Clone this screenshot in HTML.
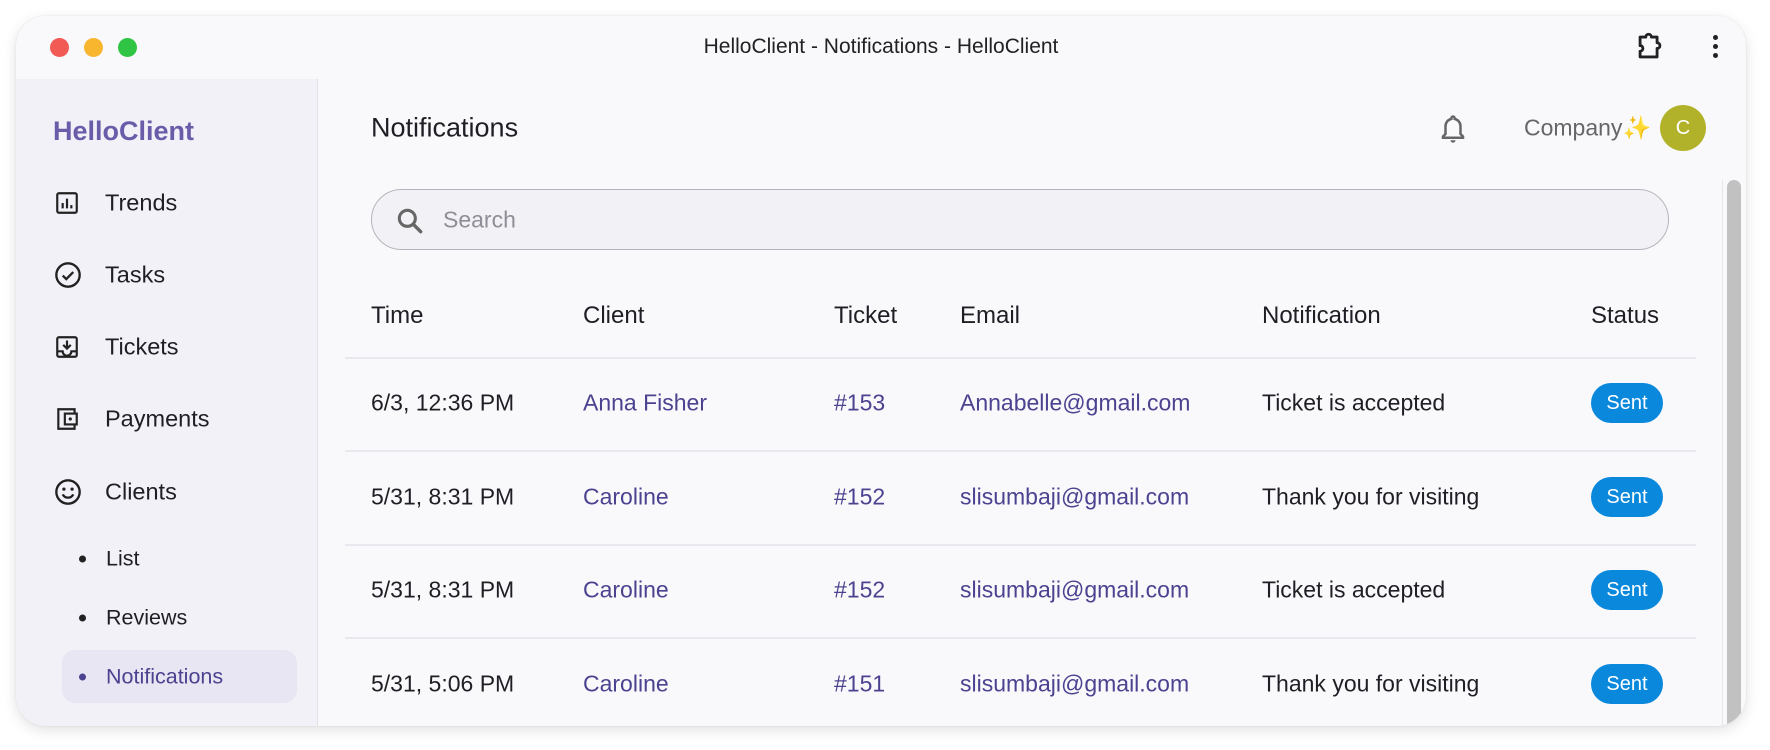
<!DOCTYPE html>
<html><head><meta charset="utf-8"><style>
*{margin:0;padding:0;box-sizing:border-box}
body{width:1770px;height:750px;background:#fff;font-family:"Liberation Sans",sans-serif;position:relative;overflow:hidden;color:#1e1e24}
.win{position:absolute;left:16px;top:16px;width:1730px;height:710px;border-radius:30px;background:#f9f9fc;overflow:hidden;box-shadow:0 4px 14px rgba(0,0,0,.12),0 0 2px rgba(0,0,0,.08)}
.a{position:absolute;white-space:nowrap}
.dot{position:absolute;width:19px;height:19px;border-radius:50%;top:22px}
.side{position:absolute;left:0;top:63px;width:302px;height:650px;background:#f2f1f8;border-right:1px solid #e2e1e8}
.nav{position:absolute;left:89px;font-size:23.5px;color:#1e1e24;transform:translateY(-50%)}
.ico{position:absolute;left:38px;transform:translateY(-50%)}
.sub{position:absolute;left:90px;font-size:21.5px;transform:translateY(-50%)}
.bul{position:absolute;left:63px;width:7px;height:7px;border-radius:50%;background:#222;transform:translateY(-50%)}
.th{font-size:24px;color:#1e1e24;transform:translateY(-50%)}
.td{font-size:23px;transform:translateY(-50%)}
.lk{color:#4b4290}
.line{position:absolute;left:329px;width:1351px;height:2px;background:#e8e8ee}
.sent{position:absolute;left:1575px;width:72px;height:40px;border-radius:20px;background:#0a88dc;color:#fff;font-size:20px;text-align:center;line-height:40px;transform:translateY(-50%)}
</style></head><body>
<div class="win">
 <div class="dot" style="left:34px;background:#f25a55"></div>
 <div class="dot" style="left:68px;background:#f7b62e"></div>
 <div class="dot" style="left:102px;background:#2fc443"></div>
 <div class="a" style="left:0;width:1730px;text-align:center;top:19px;font-size:21px;color:#222">HelloClient - Notifications - HelloClient</div>
 <svg class="a" style="left:1617px;top:14px" width="34" height="34" viewBox="0 0 24 24"><path d="M5 5h4a2 2 0 014 0h4v4a2 2 0 010 4v6H5v-4a2 2 0 000-4z" fill="none" stroke="#222" stroke-width="2" stroke-linejoin="round"/></svg>
 <div class="a" style="left:1697px;top:19px;width:5px;height:5px;border-radius:50%;background:#222;box-shadow:0 9px 0 #222,0 18px 0 #222"></div>

 <div class="side">
  <div class="a" style="left:37px;top:37px;font-size:27px;font-weight:bold;color:#6a5ca8">HelloClient</div>
  <svg class="ico" style="top:124px" width="26" height="26" viewBox="0 0 24 24"><rect x="3" y="3" width="18" height="18" rx="1.5" fill="none" stroke="#222" stroke-width="2"/><path d="M8 17v-5M12 17V8M16 17v-3" stroke="#222" stroke-width="2"/></svg>
  <div class="nav" style="top:124px">Trends</div>
  <svg class="ico" style="top:196px" width="28" height="28" viewBox="0 0 24 24"><circle cx="12" cy="12" r="10" fill="none" stroke="#222" stroke-width="2"/><path d="M7.5 12.5l3 3 6-6" fill="none" stroke="#222" stroke-width="2"/></svg>
  <div class="nav" style="top:196px">Tasks</div>
  <svg class="ico" style="top:268px" width="26" height="26" viewBox="0 0 24 24"><rect x="3" y="3" width="18" height="18" rx="1.5" fill="none" stroke="#222" stroke-width="2"/><path d="M12 6v7M8.5 10l3.5 3.5 3.5-3.5M3 16h5a4 4 0 008 0h5" fill="none" stroke="#222" stroke-width="2"/></svg>
  <div class="nav" style="top:268px">Tickets</div>
  <svg class="ico" style="top:340px" width="26" height="26" viewBox="0 0 24 24"><path d="M19 6V3H4v18h15v-3" fill="none" stroke="#222" stroke-width="2"/><rect x="10" y="7" width="11" height="10" fill="none" stroke="#222" stroke-width="2"/><circle cx="15" cy="12" r="1.5" fill="#222"/></svg>
  <div class="nav" style="top:340px">Payments</div>
  <svg class="ico" style="top:413px" width="28" height="28" viewBox="0 0 24 24"><circle cx="12" cy="12" r="10" fill="none" stroke="#222" stroke-width="2"/><circle cx="8.5" cy="9.5" r="1.4" fill="#222"/><circle cx="15.5" cy="9.5" r="1.4" fill="#222"/><path d="M7.5 14a5 5 0 009 0" fill="none" stroke="#222" stroke-width="2"/></svg>
  <div class="nav" style="top:413px">Clients</div>
  <div class="bul" style="top:480px"></div><div class="sub" style="top:480px">List</div>
  <div class="bul" style="top:539px"></div><div class="sub" style="top:539px">Reviews</div>
  <div class="a" style="left:46px;top:571px;width:235px;height:53px;border-radius:13px;background:#e9e6f3"></div>
  <div class="bul" style="top:598px;background:#4b4290"></div><div class="sub" style="top:598px;color:#4b4290">Notifications</div>
 </div>

 <div class="a" style="left:355px;top:112px;font-size:27px;color:#1e1e24;transform:translateY(-50%)">Notifications</div>
 <svg class="a" style="left:1422px;top:96px" width="30" height="34" viewBox="0 0 24 26"><path d="M12 3a1.3 1.3 0 011.3 1.3v.6A6 6 0 0118 11v6l2 2v1H4v-1l2-2v-6a6 6 0 014.7-6.1v-.6A1.3 1.3 0 0112 3z" fill="none" stroke="#666" stroke-width="2"/><path d="M10 22a2 2 0 004 0" fill="#666"/></svg>
 <div class="a" style="left:1508px;top:112px;font-size:23px;color:#666;transform:translateY(-50%)">Company<span style="color:#f2dc8a">✨</span></div>
 <div class="a" style="left:1644px;top:89px;width:46px;height:46px;border-radius:50%;background:#b2b22a;color:#fff;font-size:20px;text-align:center;line-height:46px">C</div>

 <div class="a" style="left:1706px;top:164px;width:1px;height:550px;background:#e5e5ea"></div>
 <div class="a" style="left:1711px;top:164px;width:14px;height:550px;border-radius:7px;background:#c1c1c1"></div>

 <div class="a" style="left:355px;top:173px;width:1298px;height:61px;border-radius:31px;background:#f2f2f6;border:1.5px solid #b4b4bc"></div>
 <svg class="a" style="left:378px;top:189px" width="32" height="32" viewBox="0 0 24 24"><circle cx="10" cy="10" r="6" fill="none" stroke="#666" stroke-width="2.3"/><path d="M14.5 14.5l5.5 5.5" stroke="#666" stroke-width="2.6" stroke-linecap="round"/></svg>
 <div class="a" style="left:427px;top:204px;font-size:23px;color:#8e8e96;transform:translateY(-50%)">Search</div>

 <div class="a th" style="left:355px;top:300px">Time</div>
 <div class="a th" style="left:567px;top:300px">Client</div>
 <div class="a th" style="left:818px;top:300px">Ticket</div>
 <div class="a th" style="left:944px;top:300px">Email</div>
 <div class="a th" style="left:1246px;top:300px">Notification</div>
 <div class="a th" style="left:1575px;top:300px">Status</div>
 <div class="line" style="top:341px"></div>

 <div class="a td" style="left:355px;top:387px">6/3, 12:36 PM</div>
 <div class="a td lk" style="left:567px;top:387px">Anna Fisher</div>
 <div class="a td lk" style="left:818px;top:387px">#153</div>
 <div class="a td lk" style="left:944px;top:387px">Annabelle@gmail.com</div>
 <div class="a td" style="left:1246px;top:387px">Ticket is accepted</div>
 <div class="sent" style="top:387px">Sent</div>
 <div class="line" style="top:434px"></div>

 <div class="a td" style="left:355px;top:481px">5/31, 8:31 PM</div>
 <div class="a td lk" style="left:567px;top:481px">Caroline</div>
 <div class="a td lk" style="left:818px;top:481px">#152</div>
 <div class="a td lk" style="left:944px;top:481px">slisumbaji@gmail.com</div>
 <div class="a td" style="left:1246px;top:481px">Thank you for visiting</div>
 <div class="sent" style="top:481px">Sent</div>
 <div class="line" style="top:528px"></div>

 <div class="a td" style="left:355px;top:574px">5/31, 8:31 PM</div>
 <div class="a td lk" style="left:567px;top:574px">Caroline</div>
 <div class="a td lk" style="left:818px;top:574px">#152</div>
 <div class="a td lk" style="left:944px;top:574px">slisumbaji@gmail.com</div>
 <div class="a td" style="left:1246px;top:574px">Ticket is accepted</div>
 <div class="sent" style="top:574px">Sent</div>
 <div class="line" style="top:621px"></div>

 <div class="a td" style="left:355px;top:668px">5/31, 5:06 PM</div>
 <div class="a td lk" style="left:567px;top:668px">Caroline</div>
 <div class="a td lk" style="left:818px;top:668px">#151</div>
 <div class="a td lk" style="left:944px;top:668px">slisumbaji@gmail.com</div>
 <div class="a td" style="left:1246px;top:668px">Thank you for visiting</div>
 <div class="sent" style="top:668px">Sent</div>
</div>
</body></html>
